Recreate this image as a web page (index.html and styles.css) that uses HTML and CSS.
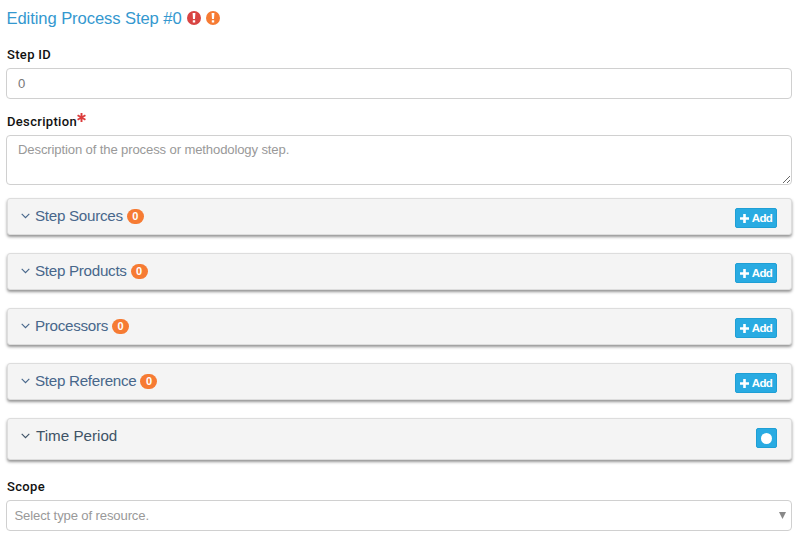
FILE: index.html
```
<!DOCTYPE html>
<html lang="en">
<head>
<meta charset="utf-8">
<title>Editing Process Step</title>
<link rel="stylesheet" href="styles.css">
</head>
<body>
<svg class="defs" aria-hidden="true">
  <symbol id="alert" viewBox="0 0 14 14"><circle cx="7" cy="7" r="7" fill="currentColor"/><path d="M5.6 2.1h2.8L8 8.1H6zM5.8 9.2h2.4v2.4H5.8z" fill="#fff"/></symbol>
  <symbol id="chevron" viewBox="0 0 9 6"><path d="M.7.8 4.5 4.6 8.3.8" fill="none" stroke="currentColor" stroke-width="1.15"/></symbol>
  <symbol id="plus" viewBox="0 0 9 9"><path d="M4.5 0v9M0 4.5h9" stroke="currentColor" stroke-width="2.6"/></symbol>
</svg>
<main class="form">
  <h1 class="title"><span class="title-text">Editing Process Step #0</span>
    <svg class="alert danger"><use href="#alert"/></svg><svg class="alert warning"><use href="#alert"/></svg></h1>
  <label class="label label-id" for="step">Step ID</label>
  <input class="control" id="step" value="0">
  <label class="label label-description" for="description">Description<svg class="required" viewBox="0 0 8 8"><path d="M4 0v8M.5 2l7 4M.5 6l7-4" stroke="currentColor" stroke-width="1.7"/></svg></label>
  <textarea class="control area" id="description" placeholder="Description of the process or methodology step."></textarea>
  <section class="panel"><svg class="chevron"><use href="#chevron"/></svg><h2 class="panel-title">Step Sources</h2><span class="badge">0</span><button class="button"><svg class="plus"><use href="#plus"/></svg>Add</button></section>
  <section class="panel"><svg class="chevron"><use href="#chevron"/></svg><h2 class="panel-title">Step Products</h2><span class="badge">0</span><button class="button"><svg class="plus"><use href="#plus"/></svg>Add</button></section>
  <section class="panel"><svg class="chevron"><use href="#chevron"/></svg><h2 class="panel-title">Processors</h2><span class="badge">0</span><button class="button"><svg class="plus"><use href="#plus"/></svg>Add</button></section>
  <section class="panel"><svg class="chevron"><use href="#chevron"/></svg><h2 class="panel-title">Step Reference</h2><span class="badge">0</span><button class="button"><svg class="plus"><use href="#plus"/></svg>Add</button></section>
  <section class="panel panel-time"><svg class="chevron"><use href="#chevron"/></svg><h2 class="panel-title">Time Period</h2><button class="button button-toggle" aria-label="Toggle time period"><span class="dot"></span></button></section>
  <div class="label label-scope">Scope</div>
  <div class="control select"><span>Select type of resource.</span><svg class="caret" viewBox="0 0 7 7"><path d="M0 0h7L3.5 7z" fill="currentColor"/></svg></div>
</main>
</body>
</html>
```
FILE: styles.css
```
* { box-sizing: border-box; }
body { margin: 0; background: #fff; font-family: "Liberation Sans", Arial, sans-serif; }
svg { display: block; flex: none; }
.defs { display: none; }
.form { display: flex; flex-direction: column; padding: 8px 8px 0 6px; }
.title { display: flex; align-items: center; height: 20px; margin: 0; font-size: 16.6px; letter-spacing: -.09px; font-weight: 400; color: #3498cf; }
.title-text { width: 181px; padding: 1px 0 0 .5px; white-space: nowrap; }
.alert { width: 14px; height: 14px; margin-right: 5px; }
.danger { color: #d84442; }
.warning { color: #f67b33; }
.label { display: flex; height: 16px; padding-left: 1px; font: 500 13px/17px Roboto, sans-serif; letter-spacing: .33px; color: #111; }
.label-id { margin: 18px 0 6px; }
.label-description { margin: 14px 0 6px; }
.label-scope { margin: 0 0 6px; }
.required { width: 9px; height: 9px; margin-top: 0; color: #dc3c3c; }
.control { display: block; width: 786px; height: 31px; margin: 0; padding: 0 11px; border: 1px solid #d0d0d0; border-radius: 4px; outline: 0; background: #fff; font: 13.1px/18px "Liberation Sans", Arial, sans-serif; letter-spacing: -.13px; color: #777; }
.area { height: 50px; margin-bottom: 13px; padding-top: 5px; resize: vertical; }
.area::placeholder { color: #999; opacity: 1; }
.panel { display: flex; align-items: flex-start; width: 785px; height: 37px; margin: 0 0 18px .5px; padding: 8px 13.5px 0 13.5px; border: 1px solid #ddd; border-radius: 3px; background: #f4f4f4; box-shadow: 0 2px 3px rgba(0, 0, 0, .42); color: #48678b; }
.chevron { width: 9px; height: 6px; margin: 6px 5px 0 0; }
.panel-title { margin: 0; font-size: 15.2px; letter-spacing: -.29px; line-height: 18px; font-weight: 400; }
.badge { width: 17px; height: 15px; margin: 2px 0 0 4px; border-radius: 8px; background: #f67b33; color: #fff; font-size: 11px; line-height: 15px; font-weight: 700; text-align: center; }
.button { display: flex; align-items: center; justify-content: center; width: 42px; height: 20px; margin: 1px 0 0 auto; padding: 0; border: 1px solid #1f9fd5; border-radius: 2px; background: #29abe2; color: #fff; font: 700 11.5px/18px "Liberation Sans", Arial, sans-serif; letter-spacing: -.55px; }
.plus { width: 9px; height: 9px; margin-right: 3px; }
.panel-time { height: 42px; color: #3f5366; }
.panel-time .chevron { margin-right: 6px; }
.panel-time .panel-title { letter-spacing: 0; }
.button-toggle { width: 21px; }
.dot { width: 11px; height: 11px; border-radius: 50%; background: #fff; }
.select { display: flex; align-items: center; justify-content: space-between; padding: 0 5px 0 7.5px; color: #999; }
.caret { width: 7px; height: 7px; color: #888; }
```
